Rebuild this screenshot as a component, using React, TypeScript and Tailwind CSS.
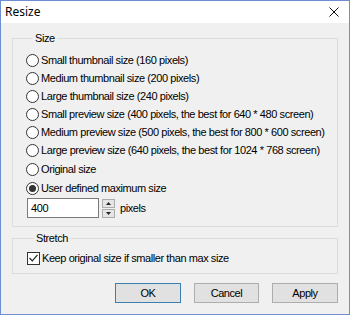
import React from "react";

const options = [
  "Small thumbnail size (160 pixels)",
  "Medium thumbnail size (200 pixels)",
  "Large thumbnail size (240 pixels)",
  "Small preview size (400 pixels, the best for 640 * 480 screen)",
  "Medium preview size (500 pixels, the best for 800 * 600 screen)",
  "Large preview size (640 pixels, the best for 1024 * 768 screen)",
  "Original size",
  "User defined maximum size",
];

function Radio({ label, checked, extra }: { label: string; checked?: boolean; extra?: boolean }) {
  return (
    <div className={`flex items-center h-[18px] ${extra ? "mt-[1px]" : ""}`}>
      <span className="w-[13px] h-[13px] rounded-full border border-[#333333] bg-white flex items-center justify-center shrink-0">
        {checked && <span className="w-[7px] h-[7px] rounded-full bg-[#333333]" />}
      </span>
      <span className="ml-[2px] whitespace-nowrap">{label}</span>
    </div>
  );
}

export default function App() {
  return (
    <div
      className="w-[350px] h-[315px] border border-[#6d8fcf] bg-[#f0f0f0] flex flex-col text-[11px] text-black tracking-[-0.42px] overflow-hidden"
      style={{ fontFamily: "Tahoma, 'Liberation Sans', 'DejaVu Sans', sans-serif" }}
    >
      {/* Title bar */}
      <div className="h-[22px] bg-white flex items-center justify-between pl-[4px] pr-[10px] shrink-0 tracking-normal">
        <span className="text-[12px]" style={{ fontFamily: "'Noto Sans', 'Open Sans', sans-serif" }}>
          Resize
        </span>
        <svg width="10" height="10" viewBox="0 0 10 10">
          <path d="M0.5 0.5 L9.5 9.5 M9.5 0.5 L0.5 9.5" stroke="#111" strokeWidth="1" />
        </svg>
      </div>

      {/* Size group */}
      <fieldset className="mx-[11px] mt-[8px] border border-[#dcdcdc] pl-[13px] pr-[10px] pb-[8px]">
        <legend className="ml-[7px] px-[2px] leading-[14px]">Size</legend>
        <div className="flex flex-col mt-[6px]">
          {options.map((o, i) => (
            <Radio key={i} label={o} checked={i === options.length - 1} extra={i >= 6} />
          ))}
          <div className="flex items-center mt-[1px] ml-[1px]">
            <div className="w-[72px] h-[20px] border border-[#7a7a7a] bg-white flex items-center pl-[3px]">
              400
            </div>
            <div className="ml-[3px] flex flex-col gap-[1px]">
              <div className="w-[13px] h-[9px] border border-[#acacac] bg-[#e5e5e5] flex items-center justify-center">
                <svg width="5" height="3" viewBox="0 0 5 3">
                  <path d="M2.5 0 L5 3 L0 3 Z" fill="#222" />
                </svg>
              </div>
              <div className="w-[13px] h-[9px] border border-[#acacac] bg-[#e5e5e5] flex items-center justify-center">
                <svg width="5" height="3" viewBox="0 0 5 3">
                  <path d="M0 0 L5 0 L2.5 3 Z" fill="#222" />
                </svg>
              </div>
            </div>
            <span className="ml-[5px]">pixels</span>
          </div>
        </div>
      </fieldset>

      {/* Stretch group */}
      <fieldset className="mx-[11px] mt-[4px] border border-[#dcdcdc] pl-[14px] pr-[10px] pb-[6px]">
        <legend className="ml-[7px] px-[2px] leading-[14px]">Stretch</legend>
        <div className="flex items-center h-[18px] mt-[4px]">
          <span className="w-[13px] h-[13px] border border-[#333333] bg-white flex items-center justify-center">
            <svg width="9" height="8" viewBox="0 0 9 8">
              <path d="M0.5 4 L3.3 6.8 L8.5 0.8" stroke="#222" strokeWidth="1.2" fill="none" />
            </svg>
          </span>
          <span className="ml-[2px]">Keep original size if smaller than max size</span>
        </div>
      </fieldset>

      {/* Buttons */}
      <div className="flex justify-end gap-[13px] mt-[9px] mr-[11px]">
        <button className="w-[66px] h-[20px] border border-[#3c7fb1] bg-[#e1e1e1]">OK</button>
        <button className="w-[65px] h-[20px] border border-[#adadad] bg-[#e1e1e1]">Cancel</button>
        <button className="w-[66px] h-[20px] border border-[#adadad] bg-[#e1e1e1]">Apply</button>
      </div>
    </div>
  );
}
